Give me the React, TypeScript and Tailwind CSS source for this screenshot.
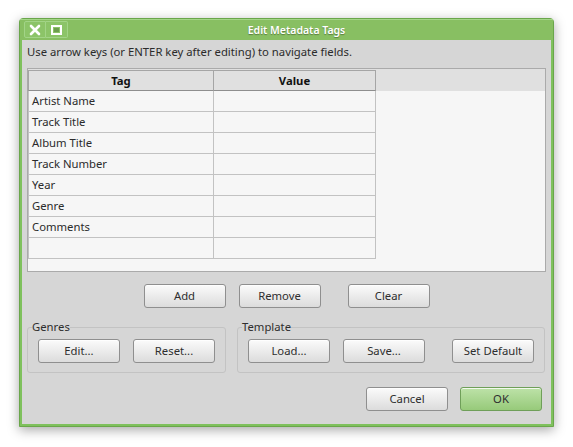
import type {ReactNode} from 'react';

const FIELDS = ['Artist Name', 'Track Title', 'Album Title', 'Track Number', 'Year', 'Genre', 'Comments', ''];

function Btn({children, ok, className = ''}: {children: ReactNode; ok?: boolean; className?: string}) {
  const skin = ok
    ? 'border-[#6f9f59] from-[#bde2a8] to-[#97ca7a]'
    : 'border-[#8f8f8f] from-[#fbfbfb] to-[#dcdcdc]';
  return (
    <button
      className={`h-[24px] w-[82px] shrink-0 rounded-[3px] border bg-linear-to-b text-[11.3px] leading-none text-[#2e2e2e] shadow-[inset_0_1px_0_rgba(255,255,255,0.8)] ${skin} ${className}`}
    >
      {children}
    </button>
  );
}

function Group({title, children, className = ''}: {title: string; children: ReactNode; className?: string}) {
  return (
    <fieldset className={`rounded-[3px] border border-[#c3c3c3] px-[10px] pb-[9px] ${className}`}>
      <legend className="-ml-[6px] px-0 text-[11.3px] leading-[14px] text-[#2e2e2e]">{title}</legend>
      <div className="mt-[5px] flex">{children}</div>
    </fieldset>
  );
}

export default function App() {
  return (
    <div className="min-h-screen bg-white pl-[19px] pt-[18px] font-['Noto_Sans',sans-serif]">
      <div className="flex h-[409px] w-[535px] flex-col rounded-t-[4px] border border-[#6aa64b] bg-[#7fc15d] shadow-[0_3px_12px_rgba(0,0,0,0.35)]">
        {/* title bar */}
        <div className="flex h-[21px] items-start border-t border-[#a4d688] bg-[#88bf62]">
          <div className="ml-[4px] mt-[1px] flex">
            <span className="flex h-[17px] w-[22px] items-center justify-center rounded-l-[2px] border border-[#a2d487] bg-[#8cc468]">
              <svg width="12" height="12" viewBox="0 0 12 12">
                <path d="M2 2 10 10M10 2 2 10" stroke="#fff" strokeWidth="2.6" strokeLinecap="round" />
              </svg>
            </span>
            <span className="flex h-[17px] w-[22px] items-center justify-center rounded-r-[2px] border border-l-0 border-[#a2d487] bg-[#8cc468]">
              <span className="h-[10px] w-[11px] border-2 border-[#fff] bg-[#6d9d4f] shadow-[inset_0_0_0_1px_#8cc468]" />
            </span>
          </div>
          <div className="flex-1 pr-[28px] text-center text-[10.5px] leading-[20px] font-semibold text-white [text-shadow:0_1px_1px_rgba(0,0,0,0.35)]">
            Edit Metadata Tags
          </div>
        </div>

        {/* dialog body */}
        <div className="mx-[2px] mb-[2px] flex flex-1 flex-col bg-[#d6d6d6] px-[5px] pt-[4px] text-[#2b2b2b]">
          <p className="h-4 text-[11.3px] leading-4">Use arrow keys (or ENTER key after editing) to navigate fields.</p>

          <div className="mt-[8px] h-[204px] border border-[#aaaaaa] bg-[#f6f6f6]">
            <div className="flex h-[22px] bg-[#e0e0e0] pt-[1px] text-[11.3px] leading-[19px] font-bold text-[#111]">
              <div className="w-[186px] border border-[#a5a5a5] border-b-[#8e8e8e] text-center">Tag</div>
              <div className="w-[162px] border border-l-0 border-[#a5a5a5] border-b-[#8e8e8e] text-center">Value</div>
            </div>
            {FIELDS.map((f, i) => (
              <div key={i} className="flex h-[21px] text-[11.3px] leading-[20px]">
                <div className="w-[186px] border-x border-b border-[#c2c2c2] pl-[3px]">{f}</div>
                <div className="w-[162px] border-r border-b border-[#c2c2c2]" />
              </div>
            ))}
          </div>

          <div className="mt-[12px] flex justify-center">
            <Btn>Add</Btn>
            <Btn className="ml-[13px]">Remove</Btn>
            <Btn className="ml-[27px]">Clear</Btn>
          </div>

          <div className="mt-[12px] flex gap-[11px]">
            <Group title="Genres" className="w-[199px]">
              <Btn>Edit...</Btn>
              <Btn className="ml-[13px]">Reset...</Btn>
            </Group>
            <Group title="Template" className="w-[308px]">
              <Btn>Load...</Btn>
              <Btn className="ml-[13px]">Save...</Btn>
              <Btn className="ml-auto">Set Default</Btn>
            </Group>
          </div>

          <div className="mt-[14px] flex justify-end gap-[12px] pr-[4px]">
            <Btn>Cancel</Btn>
            <Btn ok>OK</Btn>
          </div>
        </div>
      </div>
    </div>
  );
}
